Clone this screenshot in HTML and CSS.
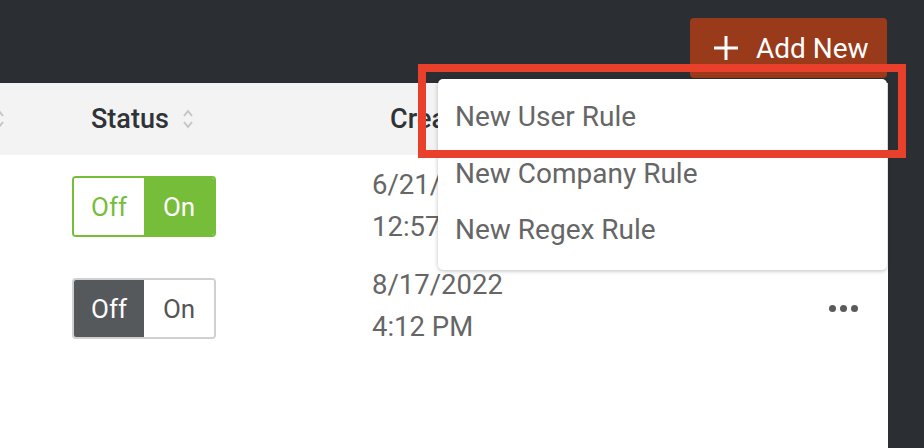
FILE: index.html
```html
<!DOCTYPE html>
<html>
<head>
<meta charset="utf-8">
<link rel="stylesheet" href="styles.css">
</head>
<body>
<div class="page">
  <div class="topbar">
    <button class="add-btn">
      <svg class="plus" width="26" height="26" viewBox="0 0 26 26"><path d="M13 1v24M1 13h24" stroke="#fff" stroke-width="3" fill="none"/></svg>
      <span>Add New</span>
    </button>
  </div>
  <div class="panel">
    <div class="row head">
      <div class="cell c1"><svg class="sort edge" width="12" height="22" viewBox="0 0 12 22"><path d="M2 8l4-5 4 5M2 14l4 5 4-5" stroke="#c4c4c4" stroke-width="2" fill="none"/></svg></div>
      <div class="cell c2 hcell">Status <svg class="sort" width="12" height="22" viewBox="0 0 12 22"><path d="M2 8l4-5 4 5M2 14l4 5 4-5" stroke="#c4c4c4" stroke-width="2" fill="none"/></svg></div>
      <div class="cell c3 hcell">Created</div>
      <div class="cell c4"></div>
    </div>
    <div class="row body r1">
      <div class="cell c1"></div>
      <div class="cell c2">
        <div class="toggle on"><span class="t-off">Off</span><span class="t-on">On</span></div>
      </div>
      <div class="cell c3 date"><div>6/21/2022</div><div>12:57 PM</div></div>
      <div class="cell c4"></div>
    </div>
    <div class="row body r2">
      <div class="cell c1"></div>
      <div class="cell c2">
        <div class="toggle off"><span class="t-off">Off</span><span class="t-on">On</span></div>
      </div>
      <div class="cell c3 date"><div>8/17/2022</div><div>4:12 PM</div></div>
      <div class="cell c4"><span class="dots"><i></i><i></i><i></i></span></div>
    </div>
  </div>
  <div class="menu">
    <div class="item">New User Rule</div>
    <div class="item">New Company Rule</div>
    <div class="item">New Regex Rule</div>
  </div>
  <div class="highlight"></div>
</div>
</body>
</html>
```
FILE: styles.css
```css
* { box-sizing: border-box; }
html, body { margin: 0; padding: 0; }
body {
  background: #2b2f33;
  font-family: Roboto, "Liberation Sans", sans-serif;
  width: 924px;
  height: 448px;
  overflow: hidden;
}
.page { position: relative; width: 924px; height: 448px; }
.topbar {
  height: 83px;
  display: flex;
  justify-content: flex-end;
  align-items: flex-start;
  padding: 18px 37px 0 0;
}
.add-btn {
  height: 60px;
  width: 197px;
  background: #993a1a;
  border: none;
  border-radius: 4px;
  color: #fff;
  font-family: Roboto, "Liberation Sans", sans-serif;
  font-size: 28px;
  display: flex;
  align-items: center;
  padding: 0 0 0 23px;
  gap: 17px;
}
.plus { display: block; }
.panel {
  width: 888px;
  height: 365px;
  background: #fff;
}
.row { display: flex; }
.head { height: 72px; background: #f3f3f3; align-items: center; }
.cell.c1 { width: 72px; }
.cell.c2 { width: 300px; }
.cell.c3 { width: 440px; }
.cell.c4 { flex: 1; }
.hcell {
  padding-left: 19px;
  font-size: 27px;
  font-weight: 500;
  color: #2f3337;
  display: flex;
  align-items: center;
  gap: 13px;
}
.c3.hcell { padding-left: 18px; }
.sort { display: block; }
.sort.edge { margin-left: -7px; }
.body { align-items: flex-start; }
.r1 { height: 105px; padding-top: 21px; }
.r2 { height: 105px; padding-top: 18px; }
.toggle {
  width: 144px;
  height: 61px;
  border-radius: 4px;
  display: flex;
  overflow: hidden;
  font-size: 26px;
}
.toggle span { flex: 1; display: flex; align-items: center; justify-content: center; }
.toggle.on { border: 2px solid #76bd3a; }
.toggle.on .t-off { color: #76bd3a; background: #fff; }
.toggle.on .t-on { color: #fff; background: #76bd3a; }
.toggle.off { border: 2px solid #d0d0d0; }
.toggle.off .t-off { color: #fff; background: #55595c; }
.toggle.off .t-on { color: #555; background: #fff; }
.date {
  font-size: 27.5px;
  color: #666;
  line-height: 42px;
  margin-top: -12px;
}
.r2 .date { margin-top: -14px; }
.c4 { display: flex; justify-content: flex-end; }
.dots { display: flex; gap: 4px; margin: 27px 30px 0 0; }
.dots i { width: 7px; height: 7px; border-radius: 50%; background: #5a5a5a; display: block; }
.menu {
  position: absolute;
  left: 438px;
  top: 79px;
  width: 449px;
  height: 191px;
  background: #fff;
  border-radius: 5px;
  box-shadow: 0 1px 4px rgba(0,0,0,0.25);
  padding-top: 10px;
}
.item {
  height: 56.5px;
  line-height: 56px;
  padding-left: 17px;
  font-size: 28px;
  color: #666;
}
.highlight {
  position: absolute;
  left: 418px;
  top: 64px;
  width: 488px;
  height: 94px;
  border: 8px solid #e8402a;
}
```
